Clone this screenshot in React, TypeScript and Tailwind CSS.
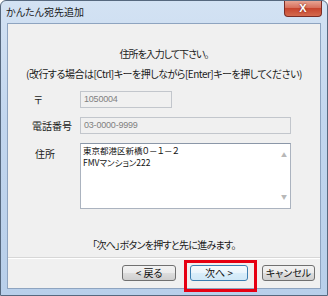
import React from "react";

const jp = "font-['MS_UI_Gothic','Noto_Sans_CJK_JP',sans-serif] [font-feature-settings:'palt']";

const Btn = ({ label, w, primary }: { label: string; w: string; primary?: boolean }) => (
  <div
    className={`${w} h-[16px] flex items-center justify-center rounded-[3px] border text-[10px] leading-none text-[#111] ${
      primary
        ? "border-[#3c7fb1] bg-[linear-gradient(#f6fbfe,#e9f5fc_50%,#d9eefa_51%,#d0e8f7)]"
        : "border-[#707070] bg-[linear-gradient(#f2f2f2,#ebebeb_50%,#dddddd_51%,#cfcfcf)]"
    }`}
  >
    {label}
  </div>
);

export default function App() {
  return (
    <div className={`relative w-[328px] h-[296px] overflow-hidden rounded-t-[6px] border border-[#56687e] bg-[linear-gradient(#d3e2f3,#c2d6ee_40%,#b8cfea)] ${jp}`}>
      {/* title bar */}
      <div className="h-[22px] flex justify-between">
        <div className="pl-[5px] pt-[5px] text-[10px] leading-[12px] text-[#1a1a1a]">かんたん宛先追加</div>
        <div className="mr-[5px] w-[38px] h-[16px] rounded-b-[4px] border border-t-0 border-[#7a2c25] bg-[linear-gradient(#e8a493,#d7705c_45%,#c7452e_50%,#d46a4e)] flex items-center justify-center">
          <span className="font-['Liberation_Sans',sans-serif] text-[11px] font-bold leading-none text-white [text-shadow:0_0_2px_#6a1a10]">X</span>
        </div>
      </div>

      {/* client area */}
      <div className="ml-[6px] w-[314px] h-[266px] border border-[#8ea4c0] bg-[#f0f0f0] text-[#1a1a1a]">
        <div className="pt-[24px] h-[36px] text-center text-[10px] leading-[12px] tracking-[-1px]">住所を入力して下さい。</div>
        <div className="mt-[8px] h-[12px] text-center text-[10px] leading-[12px] tracking-[-0.5px] whitespace-nowrap">
          (改行する場合は[Ctrl]キーを押しながら[Enter]キーを押してください)
        </div>

        <div className="mt-[11px] flex items-center">
          <div className="w-[72px] pl-[26px] text-[10px] leading-[12px]">〒</div>
          <div className="w-[92px] h-[17px] border border-[#c2c6cc] bg-[#f0f0f0] px-[3px] flex items-center font-['Liberation_Sans',sans-serif] text-[9px] tracking-[-0.2px] text-[#808080]">
            1050004
          </div>
        </div>

        <div className="mt-[9px] flex items-center">
          <div className="w-[72px] pl-[24px] text-[10px] leading-[12px]">電話番号</div>
          <div className="w-[211px] h-[17px] border border-[#c2c6cc] bg-[#f0f0f0] px-[3px] flex items-center font-['Liberation_Sans',sans-serif] text-[9px] tracking-[-0.2px] text-[#808080]">
            03-0000-9999
          </div>
        </div>

        <div className="mt-[9px] flex items-start">
          <div className="w-[72px] pl-[27px] pt-[5px] text-[10px] leading-[12px]">住所</div>
          <div className="w-[211px] h-[66px] border border-[#abb3bf] border-t-[#8b97a8] bg-white flex">
            <div className="flex-1 pl-[2px] text-[8.5px] leading-[12px] text-[#111]">
              <div>東京都港区新橋０－１－２</div>
              <div>FMVマンション222</div>
            </div>
            <div className="w-[12px] flex flex-col items-center justify-between py-[8px] text-[6px] leading-none text-[#b8b8b8]">
              <span>▲</span>
              <span>▼</span>
            </div>
          </div>
        </div>

        <div className="mt-[30px] h-[12px] text-center text-[10px] leading-[12px] tracking-[-0.7px]">「次へ」ボタンを押すと先に進みます。</div>

        <div className="mt-[6px] border-t border-[#d7d7d7] border-b border-b-white" />

        <div className="mt-[6px] flex justify-end gap-[14px] pr-[5px]">
          <Btn label="< 戻る" w="w-[54px]" />
          <Btn label="次へ >" w="w-[58px]" primary />
          <Btn label="キャンセル" w="w-[53px]" />
        </div>
      </div>

      {/* annotation highlight */}
      <div className="absolute left-[183px] top-[259px] w-[73px] h-[32px] border-[3px] border-[#e60012]" />
    </div>
  );
}
